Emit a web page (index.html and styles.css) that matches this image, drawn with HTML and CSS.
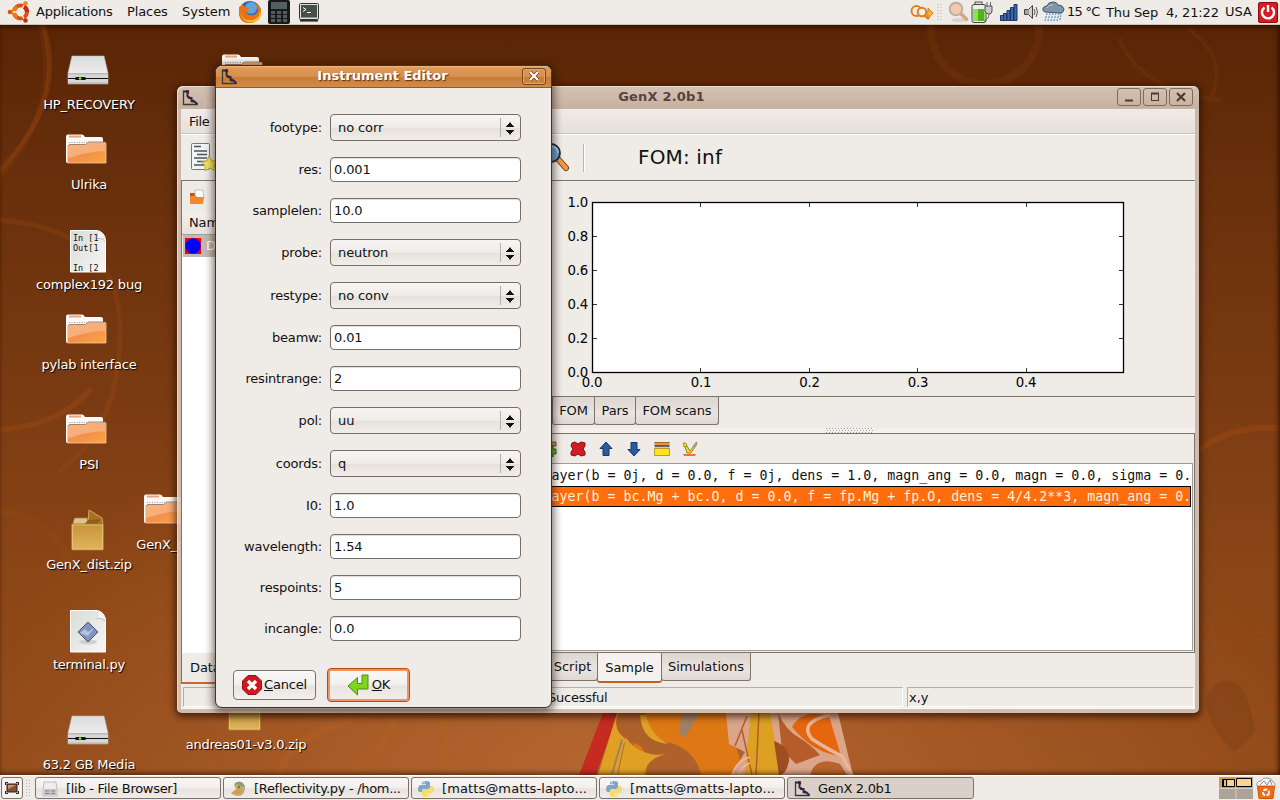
FILE: index.html
```html
<!DOCTYPE html>
<html lang="en">
<head>
<meta charset="utf-8">
<title>Instrument Editor</title>
<link rel="stylesheet" href="styles.css">
</head>
<body>
<svg width="0" height="0" class="defs">
  <defs>
    <linearGradient id="gOrange" x1="0" y1="0" x2="1" y2="1"><stop offset="0" stop-color="#f4a066"/><stop offset=".5" stop-color="#f2914c"/><stop offset="1" stop-color="#fba53c"/></linearGradient>
    <linearGradient id="gDrive" x1="0" y1="0" x2="0" y2="1"><stop offset="0" stop-color="#dcdcdc"/><stop offset="1" stop-color="#f6f6f6"/></linearGradient>
    <linearGradient id="gPage" x1="0" y1="0" x2="1" y2="1"><stop offset="0" stop-color="#d9dbd6"/><stop offset="1" stop-color="#f7f7f6"/></linearGradient>
    <linearGradient id="gBox" x1="0" y1="0" x2="0" y2="1"><stop offset="0" stop-color="#c8943a"/><stop offset="1" stop-color="#dfb45c"/></linearGradient>
    <symbol id="drive" viewBox="0 0 48 48">
      <path d="M8 8h32l4 17v11H4V25z" fill="url(#gDrive)" stroke="#bbb" stroke-width=".6"/>
      <path d="M4 25h40v11H4z" fill="#d6d6d7"/><path d="M4 25h40v1.500H4zM4 34.500h40V36H4z" fill="#b9b9bb"/>
      <path d="M4 30.500h40" stroke="#111" stroke-width="1.100"/><rect x="11" y="29" width="11" height="3" rx="1.500" fill="#111"/><circle cx="16" cy="30.500" r="1.300" fill="#7dff1c"/>
    </symbol>
    <symbol id="folder" viewBox="0 0 48 48">
      <path d="M2 8.500q0-2 2-2h14q2 0 3 2.500h16q2 0 2 2v23.500H2z" fill="#fbfaf8"/>
      <path d="M5 8.500h12" stroke="#e8a47c" stroke-width="2"/><path d="M5 14.500h18" stroke="#999" stroke-dasharray="1 1.500"/>
      <path d="M3.500 35V18.500q0-1.500 2-1.500h16l3-2.500h16.500q1 0 1 1V35z" fill="url(#gOrange)" stroke="#f7c9a2" stroke-width=".8"/>
      <path d="M4 30V19q0-1.500 2-1.500h16l3-2.500h16v8Q22 24 4 30z" fill="#fbc9a3" opacity=".5"/>
      <path d="M4 18q1-1.500 2-1.500h15.500l3-2.500h16" fill="none" stroke="#8a6b52" stroke-width=".8"/>
    </symbol>
    <symbol id="page" viewBox="0 0 48 48">
      <path d="M6.500 2.500h27q7 2 8 9v32.500h-35z" fill="url(#gPage)" stroke="#fff"/>
      <path d="M33 3q2 6-1 8 7-1 9 3-1-9-8-11z" fill="#aeb5b4"/><path d="M33 3q2 3 0 7 5-.500 8 2-1-7-8-9z" fill="#f3f4f3"/>
    </symbol>
    <symbol id="box" viewBox="0 0 48 48">
      <path d="M8.500 17l2-7h13v8z" fill="#dcc58c" stroke="#a97b2d" stroke-width=".7"/><path d="M24 14l1-12 13 8 1 7H23z" fill="#a7711f" stroke="#d9b061" stroke-width=".9"/>
      <path d="M19 18l5-6 13-1-6 7z" fill="#8d5f18"/>
      <rect x="7.500" y="16" width="32" height="26" rx="1" fill="url(#gBox)" stroke="#a9782b"/><rect x="8.500" y="17" width="30" height="24" fill="none" stroke="#e7c67d" stroke-width=".8"/>
    </symbol>
    <symbol id="genx" viewBox="0 0 16 16">
      <path d="M1.500 .5v14H15.500" fill="none" stroke="#3f3835" stroke-width="1.300"/><path d="M1.500 1.500h4v5l2 1.500h2v3l3 .5 3 3" fill="none" stroke="#222a50" stroke-width="2"/><path d="M4 1.500h3M6 7.500h2M9 11h3" stroke="#33252c" stroke-width="2.400"/><circle cx="6.500" cy="2.500" r=".9" fill="#9b1c28"/><circle cx="6" cy="6.500" r=".8" fill="#9b1c28"/>
    </symbol>
    <symbol id="python" viewBox="0 0 16 16">
      <path d="M8 0q4 0 4 2v4q0 2-2 2H6Q4 8 4 11H2Q0 11 0 8t2-4h6V3.300H4V2q0-2 4-2z" fill="#7ba6cf"/><path d="M8 16q-4 0-4-2v-4q0-2 2-2h4q2 0 2-3h2q2 0 2 3t-2 4H8v.700h4V14q0 2-4 2z" fill="#f5db72"/><circle cx="6" cy="1.800" r=".7" fill="#fff"/><circle cx="10" cy="14.200" r=".7" fill="#fff"/>
    </symbol>
  </defs>
</svg>

<header class="panel top">
  <svg class="logo" width="24" height="24" viewBox="0 0 24 24"><circle cx="13.500" cy="12" r="6.500" fill="none" stroke="#e04d17" stroke-width="4"/><path d="M10 17.500A6.500 6.500 0 0 1 10 6.500" fill="none" stroke="#e87b12" stroke-width="4"/><path d="M16.500 6.200A6.500 6.500 0 0 1 20 12" fill="none" stroke="#c42b13" stroke-width="4"/><path d="M5.500 12h4M17 5l-2 4M17 19l-2-4" stroke="#f0ede8" stroke-width="1.500"/><circle cx="3" cy="12" r="2.300" fill="#e04d17"/><circle cx="18.500" cy="3.300" r="2.300" fill="#f08a1c"/><circle cx="18.500" cy="20.500" r="2.300" fill="#c42b13"/></svg>
  <span class="m-app">Applications</span><span class="m-pla">Places</span><span class="m-sys">System</span>
  <svg width="24" height="24" viewBox="0 0 24 24"><circle cx="12" cy="12" r="11" fill="#2e67b5"/><circle cx="13" cy="8" r="6" fill="#5fa6dd"/><path d="M1 7q2 0 3-3l3 3q4 0 4 2l-3 3q2 4 7 3 5-1 5-6l-3-6q7 3 6 10-2 10-12 10T1 12z" fill="#ea7413"/><path d="M2 13q4 9 13 7 7-2 7-10 3 9-5 12-11 3-15-9z" fill="#f8bc2b"/></svg>
  <svg class="calc" width="22" height="24" viewBox="0 0 22 24"><rect x="0" y="0" width="22" height="24" rx="2" fill="#17191a"/><rect x="3" y="2" width="16" height="7" fill="#53605d"/><g fill="#535b61"><path d="M3 11h4v3H3zM9 11h4v3H9zM15 11h4v3h-4zM3 15h4v3H3zM9 15h4v3H9zM15 15h4v3h-4zM3 19h4v3H3zM9 19h4v3H9zM15 19h4v3h-4z"/></g></svg>
  <svg class="term" width="20" height="20" viewBox="0 0 20 20"><rect x=".5" y="1.500" width="19" height="16" rx="1" fill="#ddd" stroke="#333"/><rect x="2" y="3" width="16" height="12.500" fill="#46504b"/><path d="M4 5.500l3 2-3 2M8 10.500h4" fill="none" stroke="#fff"/><path d="M1 18.800h18" stroke="#222" stroke-width="1.500"/></svg>
  <div class="tray">
    <svg width="24" height="20" viewBox="0 0 24 20"><path d="M12 10h6V6l5 5-5 6v-4h-6z" fill="#f6b13c" stroke="#d7861b"/><circle cx="6.500" cy="9" r="5" fill="#f8efe4" stroke="#e07f20" stroke-width="2"/><circle cx="12" cy="10" r="4.300" fill="#f8efe4" stroke="#e07f20" stroke-width="2"/><path d="M14 13l5 4" stroke="#e07f20" stroke-width="2.400"/></svg>
    <svg class="t-grip" width="6" height="20" viewBox="0 0 6 20"><path d="M1 2v17M4 2v17" stroke="#b7b0a7" stroke-dasharray="1 2"/></svg>
    <svg class="t-mag" width="22" height="22" viewBox="0 0 22 22"><ellipse cx="12" cy="19" rx="9" ry="2" fill="#d9d3ce"/><path d="M12 12l6.500 6" stroke="#dba184" stroke-width="3.500" stroke-linecap="round"/><circle cx="8" cy="8" r="6.300" fill="#f8c9a8" stroke="#b8b1ab" stroke-width="2"/></svg>
    <svg class="t-bat" width="24" height="23" viewBox="0 0 24 23"><rect x="4" y="1" width="7" height="4" fill="#ddd" stroke="#555"/><rect x="1" y="3.500" width="14" height="18" rx="2" fill="#eceeea" stroke="#444"/><path d="M2.500 8h11v12h-11z" fill="#4fb31f"/><path d="M3 8h4v12H3z" fill="#8fdc5f"/><path d="M14 5h7v5q0 3-3 3t-4-3z" fill="#c7c9c5" stroke="#555"/><path d="M16 5V1M19.500 5V1M18 13q0 5-5 7" stroke="#666" fill="none"/></svg>
    <svg class="t-sig" width="18" height="18" viewBox="0 0 18 18"><g fill="#3f68ae" stroke="#1b3564"><path d="M.5 12.500h3v5h-3zM3.500 10.500h3v7h-3zM7 7.500h3v10H7zM10.500 4.500h3v13h-3zM14 1.500h3v16h-3z"/></g></svg>
    <svg class="t-vol" width="17" height="18" viewBox="0 0 17 18"><path d="M1.500 6.500h4l4-4v13l-4-4h-4z" fill="#d4d3d0" stroke="#444"/><path d="M3 7v4M5 6v6" stroke="#777"/><path d="M11 6q2 3 0 6M13 4q3 5 0 10" fill="none" stroke="#555"/></svg>
    <svg class="t-wea" width="23" height="22" viewBox="0 0 23 22"><path d="M3 20l2-8M6 20l2-8M9 20l2-8M12 20l2-8M15 20l2-8M18 19l1-7" stroke="#6f9fdd" stroke-width="1.400" stroke-dasharray="2 1"/><path d="M3 11q-3-1-2-4 1-2 4-2 1-4 6-4 4 0 5 3 5 0 6 4 0 3-3 4z" fill="#8195a8" stroke="#42566b"/><path d="M5 7q2-4 6-3" stroke="#b8c5d0" fill="none"/></svg>
    <span class="t-deg">15 °C</span><span class="t-clk">Thu Sep&nbsp; 4, 21:22</span><span class="t-usa">USA</span>
    <svg width="20" height="21" viewBox="0 0 20 21"><rect x=".5" y=".5" width="19" height="20" rx="1.500" fill="#d81b20" stroke="#8c0d10"/><path d="M6.500 5.500a6 6 0 1 0 7 0" fill="none" stroke="#fff" stroke-width="2.400"/><path d="M10 3v7" stroke="#fff" stroke-width="2.400"/></svg>
  </div>
</header>

<main class="desktop">
  <svg class="wallpaper" width="1280" height="750" viewBox="0 25 1280 750">
    <g fill="none" stroke="#a34c12" stroke-linecap="round">
      <path d="M40 25Q60 90 20 150T-20 160" stroke-width="6" opacity=".16"/><path d="M43 25Q68 100 0 170" stroke-width="5" opacity=".3"/><path d="M0 220Q120 230 120 330T60 470" stroke-width="5" opacity=".25"/><path d="M90 390Q60 425 0 430" stroke-width="5" opacity=".38"/><path d="M0 510Q60 520 70 570" stroke-width="8" opacity=".18"/>
      <circle cx="985" cy="30" r="54" stroke-width="8" opacity=".14"/><path d="M1120 40q20 50 100 60M1190 30q40 30 20 70" stroke-width="4" opacity=".14"/><path d="M1200 450Q1230 425 1280 428" stroke-width="6" opacity=".4"/><path d="M1200 625q30 14 80 5M1200 637q30 8 60 2" stroke-width="2" opacity=".3"/><path d="M1203 774Q1220 715 1280 703" stroke-width="4" opacity=".4"/><path d="M280 774q10-40 90-60M395 710q-5 40-40 60M445 715v50" stroke="#b86420" stroke-width="8" opacity=".25"/>
    </g>
    <path d="M1205 700q10-25 30-18 14 8 20 50l-20 20q-25-20-30-52z" fill="#713712" opacity=".3"/>
    <g>
      <path d="M603 713h15l-22 62h-17z" fill="#c52b20"/><path d="M617 713h15l4 25-12 5-7 32h-19z" fill="#dfa024"/><path d="M640 713h87l17 62H618l22-42z" fill="#de7815"/>
      <path d="M618 713h28q-10 25 25 30 25 8 30 32h-55q5-30-17-34-18-10-11-28z" fill="#ae612b"/><path d="M626 738q15 20 40 16-20 5-22 21h-26z" fill="#dfa024"/><path d="M622 740l-10 34" stroke="#9c8265" stroke-width="2"/><path d="M640 715q2 27 28 29-18-10-22-29z" fill="#dfa024"/><path d="M682 713h17l-14 25-6-5z" fill="#9f8067"/>
      <path d="M726 713h40l12 40-5 22h-42l14-23-16-8z" fill="#daa588"/><path d="M758 713h13q11 20 12 62h-38q2-25 6-62z" fill="#dca122"/><path d="M742 730l10 45M735 746l12-30M759 713l-3 62" stroke="#b65b28" stroke-width="1.500" fill="none"/>
      <path d="M770 713h68l15 62h-72z" fill="#daa588"/><path d="M792 727q10-19 37-11l12 40q-28-3-49-29z" fill="#e6660d"/><path d="M778 713q8 17 20 24t22 18l-24 9-14-14z" fill="#b65c2b"/><path d="M830 715q-32 7-18 24 17 11 30 17l10 19" stroke="#edb596" stroke-width="3.500" fill="none"/><path d="M774 741q16 6 15 20-3 14-10 14z" fill="#9f4d20"/><path d="M810 775q6-20 30-11l7 11z" fill="#b8632c"/><path d="M732 775q4-14 18-18M738 775q5-10 12-12" stroke="#edbb9d" stroke-width="1.500" fill="none"/>
    </g>
  </svg>

  <div class="item" style="left:18px;top:23px"><svg width="48" height="48"><use href="#drive"/></svg><span>HP_RECOVERY</span></div>
  <div class="item" style="left:18px;top:103px"><svg width="48" height="48"><use href="#folder"/></svg><span>Ulrika</span></div>
  <div class="item" style="left:18px;top:203px"><svg width="48" height="48"><use href="#page"/><g class="tiny"><text x="9" y="13">In [1</text><text x="9" y="23">Out[1</text><text x="9" y="43">In [2</text></g></svg><span>complex192 bug</span></div>
  <div class="item" style="left:18px;top:283px"><svg width="48" height="48"><use href="#folder"/></svg><span>pylab interface</span></div>
  <div class="item" style="left:18px;top:383px"><svg width="48" height="48"><use href="#folder"/></svg><span>PSI</span></div>
  <div class="item" style="left:18px;top:483px"><svg width="48" height="48"><use href="#box"/></svg><span>GenX_dist.zip</span></div>
  <div class="item" style="left:18px;top:583px"><svg width="48" height="48"><use href="#page"/><ellipse cx="24" cy="34" rx="9" ry="2.500" fill="#cfd0d0"/><path d="M24 14l10 10-10 10-10-10z" fill="#8193c0" stroke="#49506a"/><path d="M16 25l5-4 3 3 7-5-7 9z" fill="#b4c3de"/></svg><span>terminal.py</span></div>
  <div class="item" style="left:18px;top:683px"><svg width="48" height="48"><use href="#drive"/></svg><span>63.2 GB Media</span></div>
  <div class="item" style="left:96px;top:463px"><svg width="48" height="48"><use href="#folder"/></svg><span>GenX_dat</span></div>
  <div class="item" style="left:174px;top:23px"><svg width="48" height="48"><use href="#folder"/></svg><span>resources.zip</span></div>
  <div class="item" style="left:175px;top:663px"><svg width="48" height="48"><use href="#box"/></svg><span>andreas01-v3.0.zip</span></div>

  <section class="window">
    <div class="titlebar">
      <svg width="16" height="16"><use href="#genx"/></svg><h1>GenX 2.0b1</h1>
      <i class="wb"><svg width="10" height="10"><path d="M1 8.500h8" stroke="#4c3b2f" stroke-width="2"/></svg></i><i class="wb"><svg width="10" height="10"><rect x="1.500" y="1.500" width="7" height="7" fill="none" stroke="#4c3b2f"/><path d="M1 1.500h8" stroke="#4c3b2f" stroke-width="2"/></svg></i><i class="wb"><svg width="10" height="10"><path d="M1 1l8 8M9 1L1 9" stroke="#4c3b2f" stroke-width="2.200"/></svg></i>
    </div>
    <div class="client">
      <div class="menubar">File</div>
      <div class="toolbar">
        <svg class="new" width="28" height="32" viewBox="0 0 28 32"><rect x="1.500" y="1.500" width="18" height="26" rx="1" fill="#f3f4f4" stroke="#777"/><path d="M4 4.500h7M4 9h13M7 12.500h10M4 16h13M7 19.500h9M4 23h10" stroke="#4a5660" stroke-width="1.700"/><path d="M19 14l3 5 6 0-4 4 2 6-6-3-5 3 0-6-4-3 6-1z" fill="#f4e55c" stroke="#a99a30" stroke-width=".8"/></svg>
        <svg class="find" width="32" height="30" viewBox="0 0 32 30"><path d="M18 16l8 9" stroke="#5b3b20" stroke-width="6" stroke-linecap="round"/><path d="M19 17l7 8" stroke="#f39443" stroke-width="4.400" stroke-linecap="round"/><circle cx="11" cy="10" r="9" fill="#6b9fd2" stroke="#25282c" stroke-width="1.800"/><path d="M11 3q7 1 7 7" fill="none" stroke="#a9c9e8" stroke-width="2"/></svg>
        <i class="sep"></i><span class="fom">FOM: inf</span>
      </div>
      <div class="split">
        <div class="left">
          <div class="lbar"><svg width="16" height="16" viewBox="0 0 16 16"><path d="M1 4h5l1 1h7v10H1z" fill="#c75a0e"/><path d="M6 1h8l1 8H6z" fill="#fafafa" stroke="#aaa" stroke-width=".7"/><path d="M1 7h6l1 1h7l-1 7H1z" fill="#f4862b"/></svg></div>
          <div class="lhead">Name</div>
          <div class="lrow"><svg width="16" height="16"><path d="M0 0h16v16H0z" fill="#f00"/><circle cx="8" cy="8" r="7.700" fill="#00f"/></svg><span>Data 0</span></div>
          <div class="lbody"></div>
          <div class="ltabs"><span>Data</span></div>
        </div>
        <div class="right">
          <svg class="plot" width="695" height="215" viewBox="500 181 695 215">
            <rect x="592.500" y="202.500" width="531" height="170" fill="#fff" stroke="#000" stroke-width="1.300"/>
            <path d="M700.500 203v4M809.500 203v4M917.500 203v4M1026.500 203v4M700.500 372v-4M809.500 372v-4M917.500 372v-4M1026.500 372v-4M593 236.500h4M593 270.500h4M593 304.500h4M593 338.500h4M1123 236.500h-4M1123 270.500h-4M1123 304.500h-4M1123 338.500h-4" stroke="#000" stroke-width=".8"/>
            <g text-anchor="end"><text x="588" y="207">1.0</text><text x="588" y="241">0.8</text><text x="588" y="275">0.6</text><text x="588" y="309">0.4</text><text x="588" y="343">0.2</text><text x="588" y="377">0.0</text></g>
            <g text-anchor="middle"><text x="592" y="387">0.0</text><text x="701" y="387">0.1</text><text x="809.500" y="387">0.2</text><text x="918" y="387">0.3</text><text x="1026" y="387">0.4</text></g>
          </svg>
          <div class="tabs ptabs"><span class="w1">FOM</span><span class="w2">Pars</span><span class="w3">FOM scans</span></div>
          <div class="grip"><svg width="48" height="6"><path d="M0 .5h48M1 2.500h47M0 4.500h48" stroke="#aaa49c" stroke-dasharray="1 2"/></svg></div>
          <div class="sample">
            <div class="sbar">
              <svg width="16" height="16" viewBox="0 0 16 16"><path d="M0 1h14v4H0z" fill="#e48a3b" stroke="#333" stroke-width=".7"/><path d="M5 5h6v3h3v5h-3v3H5z" fill="#5bb12c" stroke="#2c6610"/></svg>
              <svg width="16" height="16" viewBox="0 0 16 16"><path d="M2 2l3-1 3 2 3-2 4 1v3l-2 3 2 3v3l-4 1-3-2-3 2-4-1v-3l2-3-2-3z" fill="#cf1f25" stroke="#840e13"/></svg>
              <svg width="16" height="16" viewBox="0 0 16 16"><path d="M8 1l6 6.500h-3v7H5v-7H2z" fill="#2b5ba1" stroke="#17366a"/></svg>
              <svg width="16" height="16" viewBox="0 0 16 16"><path d="M8 15l6-6.500h-3v-7H5v7H2z" fill="#2b5ba1" stroke="#17366a"/></svg>
              <svg width="16" height="16" viewBox="0 0 16 16"><path d="M.5 1h15v3.500H.5z" fill="#ec923f"/><path d="M.5 5h15" stroke="#444" stroke-width="1.600"/><path d="M.5 6h15v1.500H.5z" fill="#ccc"/><path d="M.5 7.500h15v7H.5z" fill="#ffe41b" stroke="#a47a12" stroke-width=".7"/><path d="M.5 1.500h15" stroke="#9d6735"/></svg>
              <svg width="16" height="16" viewBox="0 0 16 16"><path d="M1 13h13l-1 2H2z" fill="#eb7535"/><path d="M2 3l3 2 3 5 6-8 1 1-6 9H5z" fill="#f5d91c" stroke="#7d701c" stroke-width=".8"/><path d="M1 2l3 0 1 3-3 1z" fill="#f5d91c" stroke="#7d701c" stroke-width=".6"/><path d="M11 6l4-5" stroke="#9b9ba3" stroke-width="2"/></svg>
            </div>
            <div class="slist">
              <div class="srow">ayer(b = 0j, d = 0.0, f = 0j, dens = 1.0, magn_ang = 0.0, magn = 0.0, sigma = 0.</div>
              <div class="srow on">ayer(b = bc.Mg + bc.O, d = 0.0, f = fp.Mg + fp.O, dens = 4/4.2**3, magn_ang = 0.</div>
            </div>
          </div>
          <div class="tabs stabs"><span class="w4">Script</span><span class="w5 cur">Sample</span><span class="w6">Simulations</span></div>
        </div>
      </div>
      <div class="status"><span class="s1">Sucessful</span><span class="s2">x,y</span></div>
    </div>
  </section>

  <section class="dialog">
    <div class="dtitle"><svg width="16" height="16"><use href="#genx"/></svg><h2>Instrument Editor</h2><i class="wb"><svg width="10" height="10"><path d="M1 1l8 8M9 1L1 9" stroke="#6b3d12" stroke-width="3.600"/><path d="M1 1l8 8M9 1L1 9" stroke="#fff" stroke-width="2.200"/></svg></i></div>
    <div class="form">
      <label>footype:</label><div class="combo">no corr</div>
      <label>res:</label><div class="entry">0.001</div>
      <label>samplelen:</label><div class="entry">10.0</div>
      <label>probe:</label><div class="combo">neutron</div>
      <label>restype:</label><div class="combo">no conv</div>
      <label>beamw:</label><div class="entry">0.01</div>
      <label>resintrange:</label><div class="entry">2</div>
      <label>pol:</label><div class="combo">uu</div>
      <label>coords:</label><div class="combo">q</div>
      <label>I0:</label><div class="entry">1.0</div>
      <label>wavelength:</label><div class="entry">1.54</div>
      <label>respoints:</label><div class="entry">5</div>
      <label>incangle:</label><div class="entry">0.0</div>
    </div>
    <div class="buttons">
      <div class="btn"><svg width="20" height="20" viewBox="0 0 20 20"><path d="M6 .5h8L19.500 6v8L14 19.500H6L.5 14V6z" fill="#cc1820" stroke="#9b1015"/><path d="M6 6l8 8M14 6l-8 8" stroke="#fff" stroke-width="3.400"/></svg><span><u>C</u>ancel</span></div>
      <div class="btn ok"><svg width="22" height="22" viewBox="0 0 22 22"><path d="M15 1h6v14H10.500v6L1 12l9.500-8.500V9.500H15z" fill="#7fd321" stroke="#4c8f12"/></svg><span><u>O</u>K</span></div>
    </div>
  </section>
</main>

<footer class="panel bottom">
  <div class="show"><svg width="14" height="12" viewBox="0 0 14 12"><rect x="2" y="2" width="10" height="8" fill="#8c4d26" stroke="#222"/><path d="M3 3h8l-8 4z" fill="#c99779"/><path d="M.5 3V.5H3M11 .5h2.500V3M13.500 9v2.500H11M3 11.500H.5V9" fill="none" stroke="#222"/></svg></div>
  <svg class="handle" width="6" height="18"><path d="M1.500 1v17M4.500 1v17" stroke="#b7b0a7" stroke-dasharray="1 2"/></svg>
  <div class="task"><svg width="16" height="16" viewBox="0 0 16 16"><path d="M2 1h12l1 8v6H1V9z" fill="#eee" stroke="#bbb"/><path d="M2 8h12v6H2z" fill="#c4c4c4"/><path d="M3 10h4M9 10h4M3 12.500h4M9 12.500h4" stroke="#888"/></svg><span>[lib - File Browser]</span></div>
  <div class="task"><svg width="16" height="16" viewBox="0 0 16 16"><path d="M4 4q2-4 7-3 4 2 4 7-1 6-6 7-5 0-8-3 5 0 6-2z" fill="#c2ab72"/><path d="M4 4q2-4 7-3 3 1 4 5l-4-1q-4-3-7-1z" fill="#78a774"/><path d="M1 12l7-5 4 2-3 4z" fill="#d89b49"/><circle cx="9" cy="6" r="1" fill="#654"/></svg><span>[Reflectivity.py - /hom...</span></div>
  <div class="task wide"><svg width="16" height="16"><use href="#python"/></svg><span>[matts@matts-lapto...</span></div>
  <div class="task wide"><svg width="16" height="16"><use href="#python"/></svg><span>[matts@matts-lapto...</span></div>
  <div class="task act"><svg width="16" height="16"><use href="#genx"/></svg><span>GenX 2.0b1</span></div>
  <svg class="pager" width="34" height="22" viewBox="0 0 34 22"><path d="M0 0h34v22H0z" fill="#aea397"/><path d="M0 0h17v11H0z" fill="#c8a24e"/><path d="M17 0v22M0 11.500h34" stroke="#d7cfc5"/><path d="M3.500 2.500h12v7h-12zM17.500 1.500h15v8h-15z" fill="#fcd296" stroke="#000"/><path d="M4.500 2v8M7.500 3v6" stroke="#000" stroke-width="1.200"/></svg>
  <svg class="trash" width="20" height="22" viewBox="0 0 20 22"><path d="M1 9q-1-5 4-5 2-4 6-3 5 0 6 4 3 1 2 4z" fill="#f5f5f5" stroke="#999"/><path d="M4 8l4-4 3 4 3-5 2 5" fill="none" stroke="#888"/><path d="M1.500 9.500h17l-1.500 12H3z" fill="#ef6c18" stroke="#d45409"/><circle cx="10" cy="15.500" r="3" fill="none" stroke="#fff" stroke-width="1.800" stroke-dasharray="4 1.500"/></svg>
</footer>
</body>
</html>
```
FILE: styles.css
```css
* { box-sizing: border-box; }
body { margin: 0; width: 1280px; height: 800px; overflow: hidden; display: flex; flex-direction: column; font: 13px/16px "DejaVu Sans", sans-serif; color: #111; background: #7a3a10; white-space: nowrap; }
svg { display: block; flex: none; }
i { font-style: normal; }
.defs { position: absolute; }

.panel { flex: none; display: flex; align-items: center; background: #efebe7; position: relative; }
.top { height: 25px; border-bottom: 1px solid #cdc3b8; padding: 0 2px 0 7px; letter-spacing: -.25px; }
.top > span, .tray > span { flex: none; }
.m-app { width: 91px; margin-left: 5px; }
.m-pla { width: 55px; letter-spacing: -.1px; }
.m-sys { width: 56px; letter-spacing: 0; }
.calc { margin-left: 6px; }
.term { margin-left: 9px; }
.tray { display: flex; align-items: center; margin-left: auto; }
.t-grip { margin-left: 3px; }
.t-mag { margin-left: 5px; }
.t-bat { margin-left: 1px; }
.t-sig { margin-left: 5px; }
.t-vol { margin-left: 5px; }
.t-wea { margin-left: 2px; }
.t-deg { width: 39px; margin-left: 2px; letter-spacing: -.7px; }
.t-clk { width: 119px; padding-top: 1px; letter-spacing: -.15px; }
.t-usa { width: 33px; letter-spacing: 0; }

.desktop { flex: none; position: relative; height: 750px; overflow: hidden; background: radial-gradient(ellipse 680px 420px at 620px 760px, rgba(188,108,52,.85), rgba(160,85,35,0)), linear-gradient(#592505 0, #69300c 22%, #7b3b12 50%, #8a4516 72%, #934b1a 100%); }
.desktop::after { content: ""; position: absolute; inset: 0; pointer-events: none; box-shadow: inset 0 4px 5px -2px rgba(30,10,0,.6), inset -4px 0 5px -2px rgba(30,10,0,.5), inset 0 -4px 5px -2px rgba(30,10,0,.5); }
.wallpaper { position: absolute; left: 0; top: 0; }
.item { position: absolute; width: 140px; display: flex; flex-direction: column; align-items: center; color: #fff; text-shadow: 1px 1px 1px #000; letter-spacing: -.2px; }
.item > span { line-height: 16px; padding: 1px 0 0 2px; }
.tiny { font: 8.500px "DejaVu Sans Mono", monospace; letter-spacing: 0; fill: #111; text-shadow: none; }

.window { position: absolute; left: 177px; top: 61px; width: 1022px; height: 627px; padding: 0 4px; border-radius: 6px 6px 5px 5px; background: linear-gradient(rgba(219,204,192,.94), rgba(207,184,170,.94) 22px, rgba(216,200,189,.9) 23px); box-shadow: 0 2px 7px 2px rgba(30,10,0,.65), inset 1px 1px 0 #e8dcd2; display: flex; flex-direction: column; }
.titlebar { flex: none; height: 23px; display: flex; align-items: center; gap: 4px; padding: 0 2px 1px 1px; }
.titlebar > svg { margin-top: 2px; }
h1, h2 { flex: 1; margin: 0; text-align: center; font: bold 13px/16px "DejaVu Sans", sans-serif; }
h1 { color: #55443a; padding-left: 8px; letter-spacing: .2px; }
h2 { padding-left: 6px; }
.wb { width: 24px; height: 18px; margin-right: -1px; border: 1px solid #7c6a5e; border-radius: 3px; display: flex; align-items: center; justify-content: center; }
.titlebar .wb { margin-right: -2px; }
.titlebar .wb:last-child { margin-right: 0; }
.client { flex: 1; display: flex; flex-direction: column; background: #efebe7; min-height: 0; margin-bottom: 4px; }
.menubar { flex: none; height: 25px; padding: 5px 8px; letter-spacing: -.3px; background: linear-gradient(#efebe7, #e6e0da); border-bottom: 1px solid #c9c2ba; }
.toolbar { flex: none; height: 47px; display: flex; align-items: center; border-bottom: 1px solid #7d7369; border-top: 1px solid #fff; }
.new { margin-left: 9px; }
.find { margin-left: 322px; }
.sep { width: 2px; height: 28px; margin-left: 11px; border-left: 1px solid #bdb6ae; border-right: 1px solid #fff; }
.fom { font-size: 20px; line-height: 24px; margin-left: 53px; padding-bottom: 2px; letter-spacing: .15px; }
.split { flex: none; height: 503px; display: flex; }
.left { width: 319px; display: flex; flex-direction: column; border-left: 1px solid #7d7369; }
.lbar { height: 31px; padding: 8px 7px; }
.lhead { height: 23px; padding: 3px 7px; letter-spacing: -.1px; border-bottom: 1px solid #a79e94; background: linear-gradient(#f1eeeb, #e8e3de); }
.lrow { height: 22px; margin-left: 1px; padding: 3px 2px; display: flex; gap: 5px; background: #c4b9af; color: #fff; }
.lbody { flex: 1; background: #fff; }
.ltabs { height: 31px; display: flex; background: #efebe7; }
.ltabs span { width: 90px; padding: 7px 8px; letter-spacing: -.1px; border-bottom: 2px solid #c46b35; }
.right { width: 695px; display: flex; flex-direction: column; }
.plot { font-size: 13.300px; letter-spacing: -.2px; }
.tabs { display: flex; align-items: flex-start; border-top: 1px solid #7d7369; }
.tabs span { height: 28px; padding-top: 6px; text-align: center; border: 1px solid #7d7369; border-top: 0; margin-right: -1px; border-radius: 0 0 3px 3px; background: linear-gradient(#ddd6d0, #e9e4df 60%, #dfd8d2); }
.ptabs { height: 32px; padding-left: 52px; letter-spacing: -.1px; }
.w1 { width: 43px; } .w2 { width: 42px; } .w3 { width: 84px; }
.stabs { height: 30px; padding-left: 47px; margin-top: -1px; }
.w4 { width: 51px; } .w5 { width: 65px; } .w6 { width: 90px; }
.tabs .cur { height: 30px; padding-top: 7px; background: #f4f1ee; border-bottom: 2px solid #c65f25; }
.grip { height: 5px; padding-left: 326px; background: #f3f0ed; }
.sample { height: 220px; border: 1px solid #7d7369; border-bottom-color: #6d635a; padding: 0 1px 1px; display: flex; flex-direction: column; }
.sbar { height: 29px; display: flex; align-items: center; gap: 12px; padding-left: 40px; }
.slist { flex: 1; border: 1px solid #a39b93; background: #fff; overflow: hidden; padding: 1px 1px 0 48.500px; }
.srow { height: 21px; line-height: 21px; overflow: hidden; font-family: "DejaVu Sans Mono", monospace; font-size: 13.290px; }
.srow.on { background: #ff6d0c; color: #fff3df; border: solid #000; border-width: 1px 1px 1px 0; line-height: 19px; }
.status { flex: 1; display: flex; gap: 4px; padding: 3px 0 1px 2px; border-bottom: 1px solid #fff; }
.status span { border: 1px solid; border-color: #b6afa7 #fff #fff #b6afa7; padding-top: 2px; }
.s1 { width: 720px; padding-left: 364px; letter-spacing: -.25px; }
.s2 { width: 287px; padding-left: 1px; }

.dialog { position: absolute; left: 215px; top: 40px; width: 337px; height: 643px; border: 1px solid #3c352f; border-radius: 7px; background: #efebe7; box-shadow: 0 2px 8px 2px rgba(30,15,5,.6); display: flex; flex-direction: column; overflow: hidden; }
.dtitle { flex: none; height: 22px; display: flex; align-items: center; padding: 0 5px 1px; background: linear-gradient(#eeb880 0, #dc9a5b 2px, #d78f4c 50%, #c77d38 55%, #d38b48); border-bottom: 1px solid #8e5a2b; color: #fff; text-shadow: 1px 1px 1px #5b3410; }
.dtitle > svg { margin-top: 1px; }
.dtitle .wb { border-color: #754719; height: 17px; margin-right: 0; box-shadow: inset 0 0 0 1px #e0a670; }
.form { display: grid; grid-template-columns: 106px 191px; column-gap: 8px; row-gap: 16px; padding-top: 26px; align-items: center; }
.form label { text-align: right; letter-spacing: -.2px; }
.combo, .entry { border: 1px solid #776d64; border-radius: 4px; letter-spacing: -.1px; }
.entry { height: 25px; padding: 4px 3px; background: #fff; box-shadow: inset 0 1px 1px #ddd; }
.combo { height: 27px; padding: 5px 7px; display: flex; justify-content: space-between; background: linear-gradient(#f7f5f3, #efebe8 50%, #e6e1dc 52%, #f0edea); }
.combo::after { content: ""; width: 17px; height: 19px; margin: -2px -5px 0 0; border-left: 1px solid #b7afa7; background: conic-gradient(from 145deg at 50% 0, #111 70deg, transparent 0) 5px 4px / 8px 5px no-repeat, conic-gradient(from -35deg at 50% 100%, #111 70deg, transparent 0) 5px 12px / 8px 5px no-repeat; }
.buttons { display: flex; align-items: center; gap: 11px; margin-top: 27px; padding-left: 17px; letter-spacing: -.2px; }
.btn { width: 83px; height: 30px; display: flex; align-items: center; justify-content: center; gap: 2px; border: 1px solid #7b7168; border-radius: 4px; background: linear-gradient(#faf9f8, #f2efed 50%, #e8e3df 53%, #f2efec); }
.btn.ok { height: 34px; border: 1px solid #b54c13; box-shadow: inset 0 0 0 2px #f0935f; gap: 3px; }
.combo::after { background: linear-gradient(to top right, #111 50%, transparent 52%) 9px 4px / 4px 5px no-repeat, linear-gradient(to top left, #111 50%, transparent 52%) 5px 4px / 4px 5px no-repeat, linear-gradient(to bottom right, #111 50%, transparent 52%) 9px 12px / 4px 5px no-repeat, linear-gradient(to bottom left, #111 50%, transparent 52%) 5px 12px / 4px 5px no-repeat; }

.bottom { height: 25px; border-top: 1px solid #fff; gap: 2px; padding: 0 4px 0 1px; letter-spacing: -.3px; }
.show { width: 22px; height: 22px; display: flex; align-items: center; justify-content: center; border: 1px solid #7b7168; border-radius: 3px; background: #f4f1ee; }
.handle { margin-right: 2px; }
.task { width: 186px; height: 22px; display: flex; align-items: center; gap: 8px; padding: 1px 0 0 6px; border: 1px solid #7b7168; border-radius: 3px; background: linear-gradient(#f8f6f4, #f2efec 50%, #e8e3de 53%, #efebe8); }
.task.wide { letter-spacing: .1px; }
.task.act { width: 187px; background: #d8d0c9; }
.pager { margin-left: auto; }
.trash { margin-left: 1px; }
```
